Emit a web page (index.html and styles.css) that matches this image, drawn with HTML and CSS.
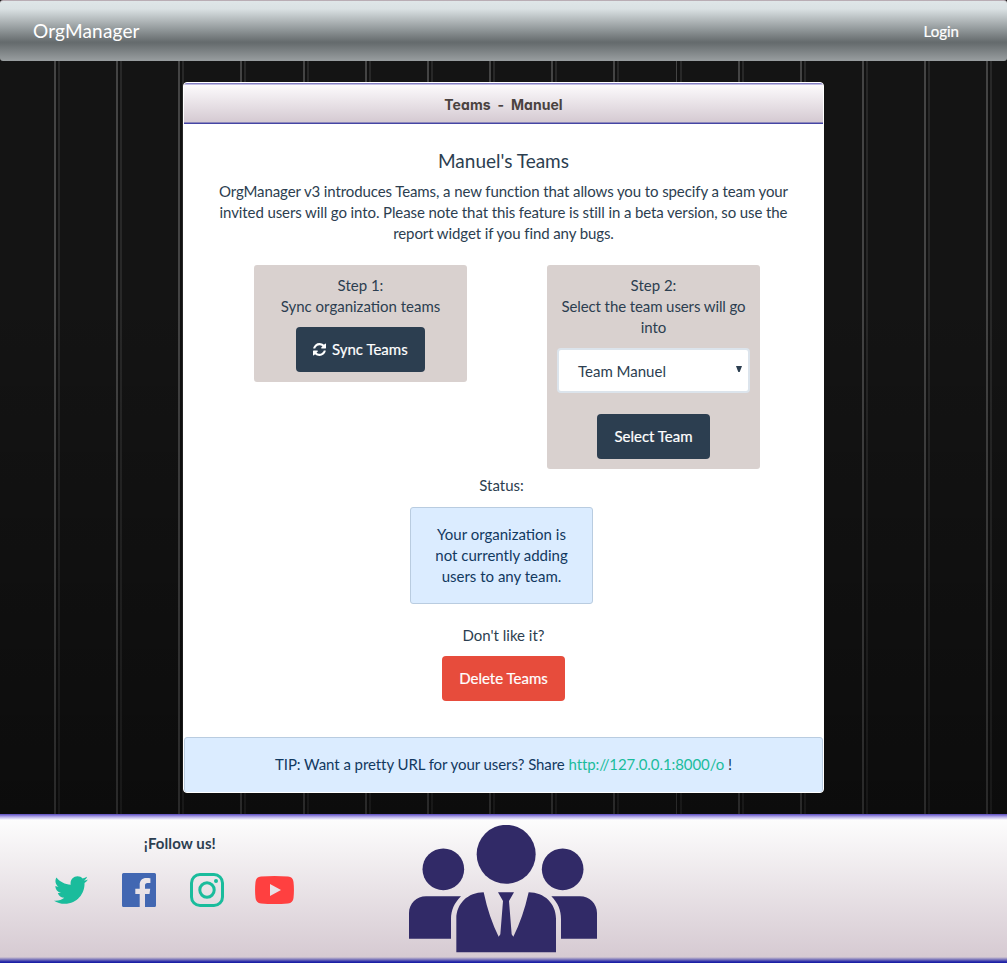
FILE: index.html
```html
<!DOCTYPE html>
<html lang="en">
<head>
<meta charset="utf-8">
<title>OrgManager</title>
<link rel="stylesheet" href="styles.css">
</head>
<body>
<nav class="navbar">
  <a class="brand">OrgManager</a>
  <a class="login">Login</a>
</nav>
<main class="main">
  <section class="panel">
    <header class="panel-heading">Teams - Manuel</header>
    <div class="panel-body">
      <h4 class="title">Manuel's Teams</h4>
      <p class="intro">OrgManager v3 introduces Teams, a new function that allows you to specify a team your invited users will go into. Please note that this feature is still in a beta version, so use the report widget if you find any bugs.</p>
      <div class="steps">
        <div class="well">
          <div>Step 1:<br>Sync organization teams</div>
          <button class="btn btn-primary btn-sync">
            <svg class="sync" viewBox="0 0 1536 1536"><path fill="#fff" d="M1511 928q0 5-1 7-64 268-268 434.500T764 1536q-146 0-282.500-55T238 1324l-129 129q-19 19-45 19t-45-19-19-45V960q0-26 19-45t45-19h448q26 0 45 19t19 45-19 45l-137 137q71 66 161 102t187 36q134 0 250-65t186-179q11-17 53-117 8-23 30-23h192q13 0 22.500 9.500t9.500 22.500zm25-800v448q0 26-19 45t-45 19h-448q-26 0-45-19t-19-45 19-45l138-138Q969 256 768 256q-134 0-250 65T332 500q-11 17-53 117-8 23-30 23H50q-13 0-22.500-9.500T18 608v-7q65-268 270-434.500T768 0q146 0 284 55.500T1297 212l130-129q19-19 45-19t45 19 19 45z"/></svg>Sync Teams</button>
        </div>
        <div class="well">
          <div>Step 2:<br><span class="tight">Select the team users will go into</span></div>
          <div class="select"><span>Team Manuel</span><svg class="caret" viewBox="0 0 6 6"><path fill="#2c3e50" d="M0 0h6L3.700 6H2.300z"/></svg></div>
          <button class="btn btn-primary btn-select">Select Team</button>
        </div>
      </div>
      <div class="label label-status">Status:</div>
      <div class="alert status">Your organization is not currently adding users to any team.</div>
      <div class="label">Don't like it?</div>
      <button class="btn btn-danger">Delete Teams</button>
    </div>
    <div class="alert tip">TIP: Want a pretty URL for your users? Share <a class="link">http://127.0.0.1:8000/o</a> !</div>
  </section>
</main>
<footer class="footer">
  <div class="follow">
    <div class="follow-title">¡Follow us!</div>
    <div class="social">
      <svg class="twitter" viewBox="0 48 512 416"><path fill="#1abc9c" d="M459.370 151.716c.325 4.548.325 9.097.325 13.645 0 138.720-105.583 298.558-298.558 298.558-59.452 0-114.680-17.219-161.137-47.106 8.447.974 16.568 1.299 25.340 1.299 49.055 0 94.213-16.568 130.274-44.832-46.132-.975-84.792-31.188-98.112-72.772 6.498.974 12.995 1.624 19.818 1.624 9.421 0 18.843-1.300 27.614-3.573-48.081-9.747-84.143-51.980-84.143-102.985v-1.299c13.969 7.797 30.214 12.670 47.431 13.319-28.264-18.843-46.781-51.005-46.781-87.391 0-19.492 5.197-37.360 14.294-52.954 51.655 63.675 129.300 105.258 216.365 109.807-1.624-7.797-2.599-15.918-2.599-24.040 0-57.828 46.782-104.934 104.934-104.934 30.213 0 57.502 12.670 76.670 33.137 23.715-4.548 46.456-13.320 66.599-25.340-7.798 24.366-24.366 44.833-46.132 57.827 21.117-2.273 41.584-8.122 60.426-16.243-14.292 20.791-32.161 39.308-52.628 54.253z"/></svg>
      <svg class="square" viewBox="0 0 34 34"><path fill="#4267b2" d="M1.500 0h31Q34 0 34 1.500v31q0 1.500-1.500 1.500H23V21h4.500l.7-5.200H23v-3.200c0-1.600.6-2.500 2.600-2.500h2.800V5.200c-.5-.1-2.200-.2-4.100-.2-4.100 0-6.600 2.400-6.600 6.800v4h-4.400V21h4.400v13H1.500Q0 34 0 32.500v-31Q0 0 1.500 0z"/></svg>
      <svg class="square" viewBox="0 0 34 34" fill="none" stroke="#1abc9c" stroke-width="3"><rect x="1.500" y="1.500" width="31" height="31" rx="8.500"/><circle cx="17" cy="17" r="7.200"/><circle cx="26" cy="8" r="2" fill="#1abc9c" stroke="none"/></svg>
      <svg class="youtube" viewBox="0 0 39 28"><path fill="#ff4040" fill-rule="evenodd" d="M6 .6Q19.500-.6 33 .6q5 .4 5.500 5.400.9 8 0 16-.5 5-5.500 5.400-13.500 1.200-27 0Q1 27 .5 22-.4 14 .5 6 1 1 6 .6zM15 8v12l11-6z"/></svg>
    </div>
  </div>
  <svg class="people" viewBox="54 44 570 384"><g fill="#312a67"><circle cx="160" cy="177" r="62.500"/><circle cx="518" cy="177" r="62.500"/><circle cx="348.500" cy="132" r="88.500"/><path d="M57 385V308C57 280 80 258 108 258H213C193 278 183 300 183 326V385zM621 385V308C621 280 598 258 570 258H484C504 278 513 300 513 326V385z"/><path d="M199 426V325C199 280 234 246 281 246Q297 322 326 379L331 372 339 272 324 246H372L357 272 365 372 370 379Q399 322 416 246C463 246 498 280 498 325V426z"/></g></svg>
</footer>
</body>
</html>
```
FILE: styles.css
```css
* { box-sizing: border-box; }
body {
  margin: 0;
  height: 963px;
  display: flex;
  flex-direction: column;
  font: 15px/21px Lato, sans-serif;
  color: #2c3e50;
  background: #111;
  overflow: hidden;
}
.navbar {
  height: 61px;
  flex: none;
  display: flex;
  align-items: center;
  justify-content: space-between;
  padding: 1px 48px 0 33px;
  border-top: 1px solid #b9adb4;
  border-radius: 3px;
  color: #fff;
  background: linear-gradient(#dfe6e8 0, #dae1e3 8px, #656b6d 41px, #686e70 43px, #999ea0 60px);
}
.brand { font-size: 19px; letter-spacing: .18px; padding-bottom: 2px; }
.login { font-size: 15px; -webkit-text-stroke: .2px #fff; }
.main {
  flex: none;
  height: 753px;
  padding-top: 21px;
  background:
    linear-gradient(transparent 30%, rgba(0,0,0,.4)),
    repeating-linear-gradient(90deg, #141414 0, #141414 54px, #444 54px, #444 56px, #111 56px, #111 58px, #282828 58px, #282828 60px, #141414 60px, #141414 62.15px);
}
.panel {
  width: 641px;
  height: 711px;
  margin: 0 auto;
  border: 1px solid #fff;
  border-radius: 4px;
  background: #fff;
  text-align: center;
  display: flex;
  flex-direction: column;
  overflow: hidden;
}
.panel-heading {
  height: 41px;
  flex: none;
  line-height: 44px;
  font-family: Inter, sans-serif;
  font-size: 14px;
  font-weight: 700;
  font-feature-settings: "cv11";
  letter-spacing: .05px;
  word-spacing: 3.5px;
  color: #4a4240;
  background: linear-gradient(#8580c4 0, #8580c4 1px, #fcfafc 2px, #d5cad2 39px, #4545a4 40px, #4545a4 41px);
}
.panel-body {
  flex: 1;
  padding: 26px 30px 0;
  display: flex;
  flex-direction: column;
  align-items: center;
}
.title { margin: 0 0 9px; font-size: 19px; font-weight: 400; line-height: 22px; }
.intro { margin: 0 0 21px; letter-spacing: -.1px; }
.tight { letter-spacing: -.1px; }
.steps { width: 506px; margin-left: 7px; display: flex; justify-content: space-between; align-items: flex-start; }
.well {
  width: 213px;
  padding: 10px;
  border-radius: 3px;
  background: #d9d1cf;
  display: flex;
  flex-direction: column;
  align-items: center;
}
.btn {
  height: 45px;
  padding: 0 17px;
  border: 0;
  border-radius: 4px;
  font: 15px/21px Lato, sans-serif;
  -webkit-text-stroke: .2px #fff;
  color: #fff;
  white-space: nowrap;
}
.btn-primary { background: #2c3e50; }
.btn-danger { margin-top: 10px; background: #e74c3c; }
.btn-sync { width: 129px; margin-top: 10px; display: flex; align-items: center; }
.btn-select { width: 113px; margin-top: 21px; }
.sync { width: 13px; height: 13px; margin-right: 6px; }
.select {
  width: 193px;
  height: 45px;
  margin-top: 10px;
  padding: 1px 6px 0 19px;
  border: 2px solid #dce4ec;
  border-radius: 4px;
  background: #fff;
  display: flex;
  align-items: center;
  justify-content: space-between;
}
.caret { width: 6px; height: 6px; margin-bottom: 4px; }
.label { margin-top: 6px; }
.label-status { margin-right: 4px; }
.alert { border: 1px solid #b9cce0; border-radius: 3px; background: #dbecff; color: #12395f; }
.status { width: 183px; height: 97px; margin: 11px 4px 15px 0; padding: 16px 20px; }
.tip { height: 56px; flex: none; margin-bottom: -1px; padding: 16px 0; letter-spacing: -.07px; }
.link { color: #1abc9c; }
.footer {
  flex: none;
  height: 149px;
  padding: 0 18px;
  display: grid;
  grid-template-columns: repeat(3, 1fr);
  justify-items: center;
  background:
    linear-gradient(#5b4bc0, rgba(140,125,220,.6) 3px, transparent 6px),
    linear-gradient(0deg, #1c20a6 1px, rgba(60,60,170,.7) 3px, transparent 6px),
    linear-gradient(#fdfdfd 5px, #d6cad2 143px);
}
.follow { padding-top: 19px; text-align: center; }
.follow-title { font-weight: 700; letter-spacing: .1px; }
.social { width: 240px; margin: 19px 12px 0 0; display: flex; align-items: center; }
.follow-title { margin-right: 0; }
.twitter { width: 34px; height: 28px; margin-right: 34px; }
.square { width: 34px; height: 34px; margin-right: 34px; }
.square + .square { margin-right: 31px; }
.youtube { width: 39px; height: 28px; }
.people { width: 190px; height: 128px; margin-top: 11px; }
```
